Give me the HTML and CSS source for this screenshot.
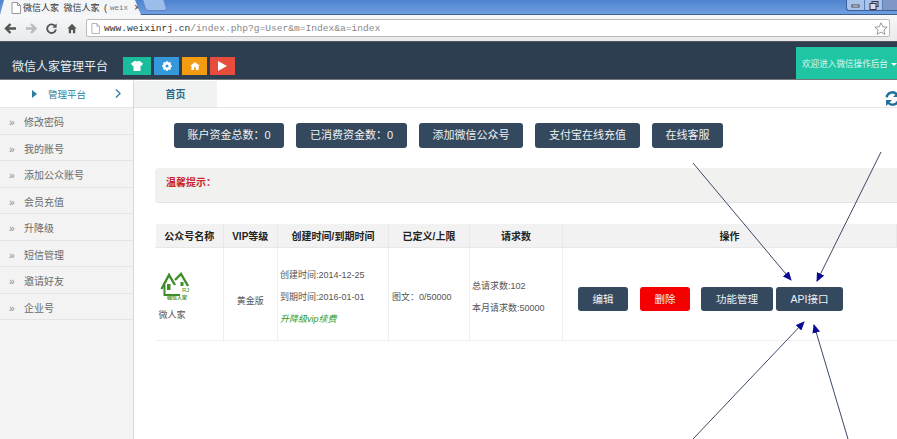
FILE: index.html
```html
<!DOCTYPE html>
<html lang="zh-CN">
<head>
  <meta charset="UTF-8">
  <title>微信人家管理平台</title>
  <link rel="stylesheet" href="styles.css">
</head>
<body>

<div class="tabstrip">
  <div class="tab">
    <svg class="tab-icon" width="10" height="12" viewBox="0 0 10 12"><path d="M1 .5h5.500l3 3v8h-8.500z" fill="#fff" stroke="#999"/><path d="M6.500 .5v3h3" fill="none" stroke="#999"/></svg>
    <span class="tab-title">微信人家 微信人家 (</span><span class="tab-fade">weix</span>
    <span class="tab-close">×</span>
  </div>
  <div class="newtab"></div>
  <div class="winbtns">
    <span class="winbtn"><svg width="10" height="8" viewBox="0 0 10 8"><rect x="1" y="4" width="7" height="2" fill="#fff" stroke="#445"/></svg></span>
    <span class="winbtn"><svg width="10" height="9" viewBox="0 0 10 9"><rect x="3" y=".5" width="6" height="5" fill="none" stroke="#334"/><rect x="1" y="2.500" width="6" height="6" fill="#dde" stroke="#334"/></svg></span>
    <span class="winbtn winbtn-close"></span>
  </div>
</div>

<div class="toolbar">
  <svg class="nav" width="12" height="11" viewBox="0 0 12 11"><path d="M12 5.500H3M6.500 1 2 5.500 6.500 10" fill="none" stroke="#555" stroke-width="2.400"/></svg>
  <svg class="nav" width="11" height="11" viewBox="0 0 11 11"><path d="M0 5.500h8.500M5 1l4.500 4.500L5 10" fill="none" stroke="#bbb" stroke-width="2.400"/></svg>
  <svg class="nav" width="11" height="11" viewBox="0 0 14 14"><path d="M11.500 4A5.500 5.500 0 1 0 12.500 8" fill="none" stroke="#555" stroke-width="2.400"/><path d="M13.500 .5v5.500h-5.500z" fill="#555"/></svg>
  <svg class="nav" width="10" height="11" viewBox="0 0 14 14"><path d="M7 .5 .5 7h2v6.500h3.200V9h2.600v4.500h3.200V7h2z" fill="#555"/></svg>
  <div class="omnibox">
    <svg width="9" height="11" viewBox="0 0 10 12"><path d="M1 .5h5.500l3 3v8h-8.500z" fill="#fff" stroke="#aaa"/><path d="M6.500 .5v3h3" fill="none" stroke="#aaa"/></svg>
    <span class="url"><b>www.weixinrj.cn</b>/index.php?g=User&amp;m=Index&amp;a=index</span>
    <svg class="star" width="14" height="13" viewBox="0 0 14 13"><path d="M7 .8 8.800 4.800 13.200 5.200 9.900 8 10.900 12.300 7 10.100 3.100 12.300 4.100 8 .8 5.200 5.200 4.800z" fill="#fff" stroke="#999"/></svg>
  </div>
</div>

<header class="topbar">
  <div class="brand">微信人家管理平台</div>
  <div class="quick">
    <span class="quick-btn green"><svg width="12" height="10" viewBox="0 0 12 10"><path d="M3.500 0h1.500q1 1.500 2 0h1.500l3.500 2.500-1.500 2.500-1-.6V10H2.500V4.400l-1 .6L0 2.500z" fill="#fff"/></svg></span>
    <span class="quick-btn blue"><svg width="10" height="10" viewBox="0 0 10 10"><circle cx="5" cy="5" r="3" fill="none" stroke="#fff" stroke-width="2"/><path d="M5 0v10M0 5h10M1.500 1.500l7 7M8.500 1.500l-7 7" stroke="#fff" stroke-width="1.500"/><circle cx="5" cy="5" r="1.500" fill="#3498db"/></svg></span>
    <span class="quick-btn orange"><svg width="10" height="8" viewBox="0 0 11 9"><path d="M5.500 0 0 4.500h1.500V9h3V6h2v3h3V4.500H11z" fill="#fff"/></svg></span>
    <span class="quick-btn red"><svg width="9" height="10" viewBox="0 0 9 10"><path d="M0 0l9 5-9 5z" fill="#fff"/></svg></span>
  </div>
  <div class="welcome">欢迎进入微信操作后台<i class="caret"></i></div>
</header>

<div class="layout">
  <aside class="sidebar">
    <div class="side-head">
      <i class="side-tri"></i>
      <span>管理平台</span>
      <svg class="side-chev" width="6" height="9" viewBox="0 0 6 9"><path d="M1 .5 5 4.500 1 8.500" fill="none" stroke="#2a7f9e" stroke-width="1.300"/></svg>
    </div>
    <ul class="side-menu">
      <li>修改密码</li>
      <li>我的账号</li>
      <li>添加公众账号</li>
      <li>会员充值</li>
      <li>升降级</li>
      <li>短信管理</li>
      <li>邀请好友</li>
      <li>企业号</li>
    </ul>
  </aside>

  <main class="content">
    <div class="tabbar">
      <div class="page-tab">首页</div>
      <svg class="refresh" width="15" height="15" viewBox="0 0 14 14"><path d="M1.500 6A5.500 5.500 0 0 1 11 3" fill="none" stroke="#1c6e9c" stroke-width="2.200"/><path d="M13 0v5.500H7.500z" fill="#1c6e9c"/><path d="M12.500 8A5.500 5.500 0 0 1 3 11" fill="none" stroke="#1c6e9c" stroke-width="2.200"/><path d="M1 14V8.500h5.500z" fill="#1c6e9c"/></svg>
    </div>

    <div class="actions">
      <a class="btn btn-w110">账户资金总数：0</a>
      <a class="btn btn-w111">已消费资金数：0</a>
      <a class="btn btn-w104">添加微信公众号</a>
      <a class="btn btn-w105">支付宝在线充值</a>
      <a class="btn btn-w71">在线客服</a>
    </div>

    <div class="notice">温馨提示：</div>

    <table class="accounts">
      <thead>
        <tr>
          <th class="c-name">公众号名称</th>
          <th class="c-vip">VIP等级</th>
          <th class="c-time">创建时间/到期时间</th>
          <th class="c-limit">已定义/上限</th>
          <th class="c-req">请求数</th>
          <th>操作</th>
        </tr>
      </thead>
      <tbody>
        <tr>
          <td>
            <svg class="logo" width="30" height="28" viewBox="0 0 30 28">
              <path d="M1.500 17 9 3l6 10M15 8l6-6 7 12" fill="none" stroke="#3c8f26" stroke-width="2.400"/>
              <path d="M4.500 13v10H20" fill="none" stroke="#3c8f26" stroke-width="2"/>
              <rect x="7" y="12" width="3.500" height="6" fill="#3c8f26"/>
              <rect x="20.500" y="10" width="3" height="4" fill="#3c8f26"/>
              <text x="22" y="20" class="logo-rj">RJ</text>
              <text x="7" y="27" class="logo-cn">微信人家</text>
            </svg>
            <div class="acct-name">微人家</div>
          </td>
          <td class="center">黄金版</td>
          <td class="lines">
            <p>创建时间:2014-12-25</p>
            <p>到期时间:2016-01-01</p>
            <p class="upgrade">升降级vip续费</p>
          </td>
          <td>图文：0/50000</td>
          <td class="lines">
            <p>总请求数:102</p>
            <p>本月请求数:50000</p>
          </td>
          <td class="ops">
            <div class="ops-row">
              <a class="btn btn-edit">编辑</a>
              <a class="btn btn-del">删除</a>
              <a class="btn btn-func">功能管理</a>
              <a class="btn btn-api">API接口</a>
            </div>
          </td>
        </tr>
      </tbody>
    </table>
  </main>
</div>

<!-- hand drawn arrows on the screenshot -->
<svg class="arrows" width="897" height="439" viewBox="0 0 897 439">
  <defs>
    <marker id="head" markerWidth="9" markerHeight="8" refX="8" refY="4" orient="auto" markerUnits="userSpaceOnUse">
      <path d="M0 0 9 4 0 8z" fill="#0a0a96"/>
    </marker>
  </defs>
  <line x1="693" y1="163" x2="791" y2="280" marker-end="url(#head)"/>
  <line x1="881" y1="152" x2="817" y2="281" marker-end="url(#head)"/>
  <line x1="693" y1="439" x2="804" y2="322" marker-end="url(#head)"/>
  <line x1="848" y1="439" x2="814" y2="325" marker-end="url(#head)"/>
</svg>

</body>
</html>
```

FILE: styles.css
```css
* {
  box-sizing: border-box;
}

html, body {
  height: 100%;
}

body {
  margin: 0;
  width: 897px;
  height: 439px;
  overflow: hidden;
  position: relative;
  display: flex;
  flex-direction: column;
  font-family: "Liberation Sans", "Noto Sans CJK SC", sans-serif;
  font-size: 9px;
  color: #555;
  background: #fff;
}

/* browser frame */
.tabstrip {
  height: 15px;
  display: flex;
  align-items: flex-start;
  background: linear-gradient(#4f83cf, #6f9fe0);
  border-bottom: 1px solid #3d5f94;
  flex: none;
}

.tab {
  width: 141px;
  height: 15px;
  display: flex;
  align-items: center;
  padding-left: 11px;
  background: #f4f5f6;
  clip-path: polygon(0 100%, 4px 0, 135px 0, 141px 100%);
  font-size: 9px;
  color: #444;
}

.tab-icon {
  margin-right: 2px;
}

.tab-title {
  white-space: nowrap;
  font-size: 9px;
  word-spacing: 2px;
  color: #333;
}

.tab-fade {
  font-family: "Liberation Mono", monospace;
  font-size: 7.500px;
  color: #777;
  margin-left: 3px;
}

.tab-close {
  margin-left: 6px;
  font-size: 11px;
  line-height: 1;
  color: #333;
}

.newtab {
  width: 22px;
  height: 11px;
  margin-left: 3px;
  background: #9dbdea;
  border: 1px solid #5d86c2;
  border-top: 0;
  border-radius: 0 0 3px 3px;
  transform: skewX(18deg);
}

.winbtns {
  margin-left: auto;
  display: flex;
  height: 11px;
  border: 1px solid #3d5f94;
  border-top: 0;
  border-right: 0;
  border-radius: 0 0 0 3px;
  background: #a9c3ea;
}

.winbtn {
  width: 18px;
  border-right: 1px solid #5d7fb5;
  display: flex;
  align-items: center;
  justify-content: center;
}

.winbtn-close {
  width: 14px;
  border-right: 0;
  background: #7f97c4;
}

.toolbar {
  height: 27px;
  display: flex;
  align-items: center;
  gap: 9.500px;
  padding: 0 7px 0 4px;
  background: linear-gradient(#f7f8f9, #e8eaec);
  border-bottom: 1px solid #555;
  flex: none;
}

.nav {
  flex: none;
}

.omnibox {
  flex: 1;
  height: 18px;
  display: flex;
  align-items: center;
  gap: 4px;
  padding: 0 1px 0 4px;
  background: #fff;
  border: 1px solid #bbb;
  border-radius: 2px;
}

.url {
  font-family: "Liberation Mono", monospace;
  font-size: 9.600px;
  color: #888;
}

.url b {
  font-weight: normal;
  color: #333;
}

.star {
  margin-left: auto;
}

/* site header */
.topbar {
  height: 38px;
  flex: none;
  display: flex;
  align-items: flex-end;
  background: #2c3e50;
  border-bottom: 1px solid #777;
}

.brand {
  margin: 0 15px 4px 12px;
  font-size: 12px;
  line-height: 16px;
  color: #e8edf0;
}

.quick {
  display: flex;
  gap: 3px;
  margin-bottom: 4px;
}

.quick-btn {
  width: 25px;
  height: 18px;
  display: flex;
  align-items: center;
  justify-content: center;
}

.green {
  width: 28px;
  background: #1abc9c;
}

.blue {
  background: #3498db;
}

.orange {
  background: #f39c12;
}

.red {
  background: #e74c3c;
}

.welcome {
  margin-left: auto;
  width: 101px;
  height: 32px;
  padding-left: 6px;
  background: #20c5a3;
  color: #dff6f0;
  font-size: 8.600px;
  line-height: 34px;
  white-space: nowrap;
}

.caret {
  display: inline-block;
  margin-left: 3px;
  vertical-align: middle;
  border: 3px solid transparent;
  border-top-color: #fff;
  border-bottom: 0;
}

/* sidebar */
.layout {
  flex: 1;
  display: flex;
  min-height: 0;
}

.sidebar {
  width: 134px;
  flex: none;
  background: #f3f3f3;
  border-right: 1px solid #d9d9d9;
}

.side-head {
  height: 28px;
  display: flex;
  align-items: center;
  padding-left: 32px;
  background: #fff;
  border-bottom: 1px solid #e6e6e6;
  color: #2a7f9e;
  font-size: 9.500px;
}

.side-tri {
  width: 0;
  height: 0;
  margin-right: 11px;
  border: 4px solid transparent;
  border-left: 5px solid #2a7f9e;
  border-right: 0;
}

.side-chev {
  margin-left: 29px;
}

.side-menu {
  list-style: none;
  margin: 0;
  padding: 0;
}

.side-menu li {
  height: 26.500px;
  line-height: 30px;
  padding-left: 24px;
  position: relative;
  font-size: 10px;
  color: #6b6b6b;
  border-bottom: 1px solid #e4e4e4;
}

.side-menu li::before {
  content: "»";
  position: absolute;
  left: 9px;
  font-size: 10px;
  color: #888;
}

/* main */
.content {
  flex: 1;
  min-width: 0;
}

.tabbar {
  height: 28px;
  display: flex;
  align-items: flex-end;
  justify-content: space-between;
  border-bottom: 1px solid #e6e6e6;
}

.page-tab {
  width: 83px;
  height: 26px;
  text-align: center;
  line-height: 28px;
  background: #f1f3f3;
  color: #2c6a8a;
  font-size: 10px;
  font-weight: bold;
}

.refresh {
  align-self: flex-end;
  margin-right: -3px;
  margin-bottom: 1px;
}

.actions {
  display: flex;
  gap: 12px;
  padding: 15px 0 0 40px;
}

.btn {
  display: block;
  height: 24.500px;
  line-height: 24px;
  text-align: center;
  white-space: nowrap;
  color: #eef2f5;
  font-size: 11px;
  background: #34495e;
  border-radius: 3px;
}

.btn-w110 {
  width: 110px;
}

.btn-w111 {
  width: 111px;
}

.btn-w104 {
  width: 104px;
}

.btn-w105 {
  width: 105px;
}

.btn-w71 {
  width: 71px;
}

.notice {
  margin: 20px 0 0 21px;
  height: 35px;
  padding: 6px 11px;
  background: #f1f1f0;
  border-radius: 4px 0 0 4px;
  border-bottom: 1px solid #e2e2e2;
  color: #c9252c;
  font-size: 10px;
  font-weight: bold;
}

.accounts {
  margin: 21px 0 0 21px;
  width: 742px;
  table-layout: fixed;
  border-collapse: collapse;
}

.accounts th {
  height: 24px;
  padding: 1px 0 0;
  background: #f2f2f2;
  border: 1px solid #e8e8e8;
  border-top: 0;
  border-left-color: transparent;
  color: #222;
  font-size: 10px;
}

.accounts td {
  height: 93px;
  padding: 5px 3px 0;
  border-right: 1px solid #eee;
  border-bottom: 1px solid #eee;
  vertical-align: middle;
}

.c-name {
  width: 67.500px;
}

.c-vip {
  width: 54.500px;
}

.c-time {
  width: 111px;
}

.c-limit {
  width: 81px;
}

.c-req {
  width: 93px;
}

.accounts td.center {
  text-align: center;
  padding-top: 13px;
}

.logo {
  display: block;
  margin: 0 0 8px 1px;
}

.logo-rj {
  font-size: 6px;
  fill: #3c8f26;
}

.logo-cn {
  font-size: 5px;
  font-weight: bold;
  fill: #3c8f26;
}

.accounts td.lines {
  padding-left: 2px;
}

.lines p {
  margin: 0;
  line-height: 22px;
}

.upgrade {
  color: #2d9a2a;
  font-style: italic;
}

.accounts td.ops {
  padding: 9px 0 0 15px;
  border-right: 0;
}

.ops-row {
  display: flex;
}

.ops .btn {
  height: 24px;
  font-size: 10.500px;
}

.btn-edit {
  width: 50px;
  margin-right: 12px;
}

.ops .btn-del {
  width: 50px;
  margin-right: 11px;
  background: #f40000;
}

.btn-func {
  width: 72px;
  margin-right: 3px;
}

.btn-api {
  width: 67px;
}

/* annotation arrows */
.arrows {
  position: absolute;
  left: 0;
  top: 0;
  pointer-events: none;
}

.arrows line {
  stroke: #3a4a66;
  stroke-width: 1;
}
```
